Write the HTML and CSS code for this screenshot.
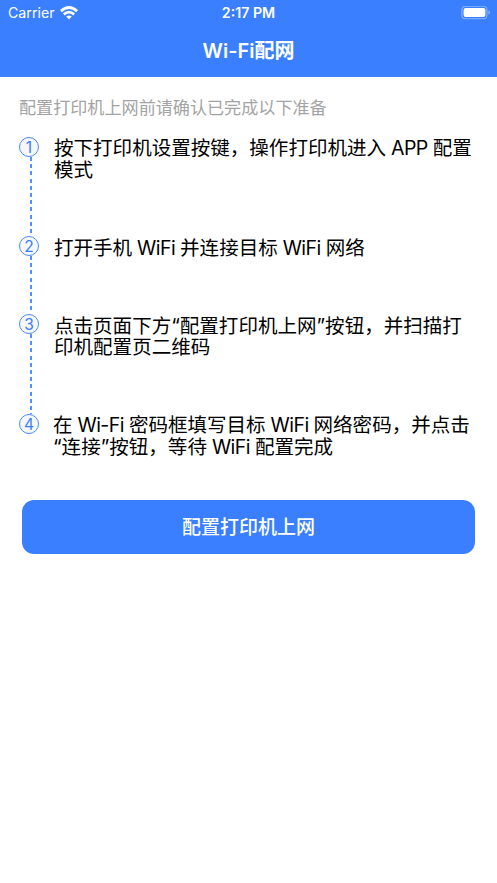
FILE: index.html
```html
<!DOCTYPE html>
<html lang="zh-CN">
<head>
<meta charset="utf-8">
<title>Wi-Fi配网</title>
<link rel="stylesheet" href="styles.css">
</head>
<body>
<header class="header">
  <div class="status">
    <div class="carrier"><span class="carrier-name">Carrier</span>
      <svg class="wifi" viewBox="0 0 18 14" width="18" height="14"><g fill="none" stroke="#fff" stroke-width="2.8"><path d="M.9 5.1Q9-2.1 17.1 5.1"/><path d="M3.8 8.4Q9 3.8 14.2 8.4"/></g><path fill="#fff" d="M6.2 10.6Q9 8.4 11.8 10.6L9 13.4Z"/></svg>
    </div>
    <span class="time">2:17 PM</span>
    <svg class="battery" viewBox="0 0 30 14" width="30" height="14"><rect x=".9" y=".3" width="25" height="12.4" rx="3.4" fill="none" stroke="#8cb5ff" stroke-width="1.1"/><rect x="2.6" y="2.1" width="21.8" height="8.8" rx="2" fill="#fff"/><path fill="#8cb5ff" d="M27.4 4.4Q29 4.9 29 6.5T27.4 8.6Z"/></svg>
  </div>
  <h1 class="title">Wi-Fi配网</h1>
</header>
<main class="content">
  <p class="hint">配置打印机上网前请确认已完成以下准备</p>
  <ol class="steps">
    <li class="step"><div class="rail"><span class="num">1</span><span class="line"></span></div><p class="text">按下打印机设置按键，操作打印机进入<span class="latin"> APP </span>配置<br>模式</p></li>
    <li class="step"><div class="rail"><span class="num">2</span><span class="line"></span></div><p class="text">打开手机<span class="latin"> WiFi </span>并连接目标<span class="latin"> WiFi </span>网络</p></li>
    <li class="step"><div class="rail"><span class="num">3</span><span class="line"></span></div><p class="text">点击页面下方“配置打印机上网”按钮，并扫描打<br>印机配置页二维码</p></li>
    <li class="step"><div class="rail rail-last"><span class="num">4</span></div><p class="text">在<span class="latin"> Wi-Fi </span>密码框填写目标<span class="latin"> WiFi </span>网络密码，并点击<br>“连接”按钮，等待<span class="latin"> WiFi </span>配置完成</p></li>
  </ol>
  <button class="submit">配置打印机上网</button>
</main>
</body>
</html>
```
FILE: styles.css
```css
* { box-sizing: border-box; }
body { margin: 0; background: #fff; color: #000; font-family: Inter, "Noto Sans CJK SC", sans-serif; }
p, h1, ol { margin: 0; padding: 0; }
.header { height: 77px; background: #397fff; color: #fff; }
.status { display: grid; grid-template-columns: 1fr auto 1fr; align-items: center; height: 25px; padding: 0 6px 0 8px; }
.carrier { display: flex; align-items: center; gap: 5px; font-size: 14.2px; }
.carrier-name { line-height: 20px; }
.time { margin-right: 2px; font-size: 14.2px; line-height: 18px; font-weight: 600; }
.battery { justify-self: end; }
.title { height: 52px; line-height: 52px; text-align: center; font-size: 20px; font-weight: 600; }
.content { padding: 19px 22px 0; }
.hint { margin-left: -3px; font-size: 17.1px; line-height: 24px; color: #a3a3a3; }
.steps { margin-top: 16.5px; margin-left: -3px; list-style: none; }
.step { display: flex; padding-bottom: 56.5px; }
.rail { display: flex; flex: none; flex-direction: column; width: 35px; margin-bottom: -56.5px; }
.rail-last { width: 34px; }
.num { flex: none; width: 20px; height: 20px; border: 1.3px solid #4a8bff; border-radius: 50%; background: #f7f7f8; color: #397fff; font-size: 15.5px; line-height: 19px; text-align: center; }
.line { flex: 1; width: 1.5px; margin-left: 11px; background: repeating-linear-gradient(#5290ff 0 4px, transparent 4px 7.2px); }
.text { padding-top: 1.5px; margin-bottom: -1.5px; font-size: 19.55px; line-height: 21.5px; white-space: nowrap; }
.latin { letter-spacing: -.55px; }
.submit { display: block; width: 453px; height: 54px; margin-top: -13px; padding: 2px 0 0; border: 0; border-radius: 12px; background: #397fff; color: #fff; font: 500 19px/52px Inter, "Noto Sans CJK SC", sans-serif; }
```
